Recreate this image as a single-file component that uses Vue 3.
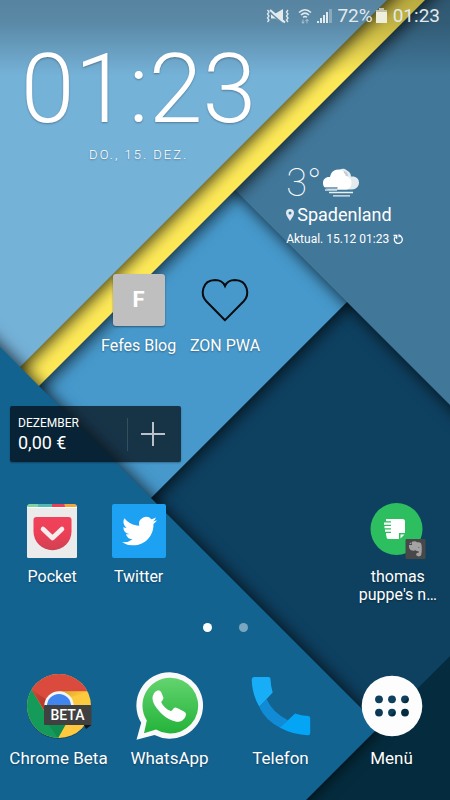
<script setup>
const signalBars = [
  { x: 0, h: 2 }, { x: 3, h: 5 }, { x: 6, h: 8 }, { x: 9, h: 11 }
]
const pages = [{ id: 1, active: true }, { id: 2, active: false }]
</script>

<template>
  <div class="screen">
    <svg class="wallpaper" viewBox="0 0 450 800" preserveAspectRatio="xMidYMid slice" aria-hidden="true">
      <defs>
        <linearGradient id="scrim" x1="0" y1="0" x2="0" y2="1">
          <stop offset="0" stop-color="#000" stop-opacity=".26" />
          <stop offset=".3" stop-color="#000" stop-opacity=".23" />
          <stop offset="1" stop-color="#000" stop-opacity="0" />
        </linearGradient>
      </defs>
      <rect width="450" height="800" fill="#0e4060" />
      <polygon points="500,606 500,900 206,900" fill="#052c3e" />
      <polygon class="sheet" points="200,0 649,0 500,149 100,549 -60,389" fill="#4799cc" />
      <polygon class="sheet" points="45,0 545,500 700,300 600,-100 200,-100" fill="#417799" />
      <polygon class="sheet" points="-75,500 525,-100 300,-100 -200,300" fill="#fde957" />
      <polygon class="sheet" points="-113,500 487,-100 -100,-100 -200,300" fill="#75b2d8" />
      <polygon class="sheet front" points="-153,194 379.500,726.500 206,900 -200,900" fill="#136391" />
      <rect width="450" height="76" fill="url(#scrim)" />
    </svg>

    <header class="status">
      <svg width="24" height="16" viewBox="0 0 24 16" aria-label="Vibrieren">
        <path d="M5 5.500h4.500L17 1v14l-7.500-4.500H5z" fill="currentColor" />
        <path d="M4 4.500l14 12" stroke="#5f8ba5" stroke-width="1.500" />
        <path d="M4 2l15 12.500" stroke="currentColor" stroke-width="2" />
        <path d="M1.500 2l1.500 2-1.500 2L3 8l-1.500 2L3 12l-1.500 2M22 2l-1.500 2L22 6l-1.500 2L22 10l-1.500 2L22 14" fill="none" stroke="currentColor" stroke-width="1.300" />
      </svg>
      <svg class="wifi" width="14" height="16" viewBox="0 0 14 16" fill="none" stroke="currentColor" stroke-width="1.600" aria-label="WLAN">
        <path d="M1 4.500q6-5.500 12 0M3 7q4-3.600 8 0M5.200 9.300q1.800-1.600 3.600 0" />
        <path d="M5 11.500v3.500M3.500 14L5 15.300 6.500 14M9 15.300v-3.800M7.500 13L9 11.500l1.500 1.500" stroke-width="1" opacity=".6" />
      </svg>
      <svg class="signal" width="15" height="15" viewBox="0 0 15 15" fill="currentColor" aria-label="Mobilfunk">
        <rect v-for="bar in signalBars" :key="bar.x" :x="bar.x" :y="15 - bar.h" width="2" :height="bar.h" />
        <rect x="12" y="1" width="3" height="14" opacity=".35" />
      </svg>
      <span>72%</span>
      <svg width="11" height="15" viewBox="0 0 11 15" aria-label="Akku">
        <path d="M3 0h5v2h3v13H0V2h3z" fill="#eeeedd" />
        <path d="M3 0h5v2h3v2H0V2h3z" fill="#8b8a70" opacity=".45" />
      </svg>
      <time class="status-time">01:23</time>
    </header>

    <main class="home">
      <section class="clock">
        <time class="time">01:23</time>
        <span class="date">DO., 15. DEZ.</span>
      </section>

      <section class="weather">
        <div class="temp">
          <span>3°</span>
          <svg width="38" height="30" viewBox="0 0 38 30" aria-label="Nebel">
            <path d="M15 4C17 1 22-.500 25 2.500c3 1.500 4 4 4 6 5-.500 8 2 8 6s-3 7-7 7H15z" fill="#e4eaee" />
            <path d="M7 21.500C3 21 1 18.500 1 15c0-4 3-6.500 7-6 1-6 6-9 11-7 3 1 4 3 4.500 6C28 9 30 12 29.500 15.500c-.500 4-3 6-6 6z" fill="#fff" />
            <path d="M22 4c2 .500 3 2 3 4" fill="none" stroke="#c5cdd2" stroke-width="2" />
            <path d="M1 20h14.500" stroke="#417799" stroke-width="1.300" />
            <path d="M3 22h12" stroke="#e8f0f4" stroke-width="1.300" />
            <path d="M7 24.500h24M11 27.800h17" stroke="#e8f0f4" stroke-width="1.300" />
          </svg>
        </div>
        <div class="place">
          <svg width="8" height="12" viewBox="0 0 8 12" aria-hidden="true">
            <path fill-rule="evenodd" d="M4 0a4 4 0 0 1 4 4c0 3-2.500 5-4 8C2.500 9 0 7 0 4a4 4 0 0 1 4-4zm0 2.500a1.500 1.500 0 1 0 0 3 1.500 1.500 0 0 0 0-3z" fill="#dfe9ef" />
          </svg>
          <span>Spadenland</span>
        </div>
        <div class="updated">
          <span>Aktual. 15.12 01:23</span>
          <button class="plain" type="button" aria-label="Aktualisieren">
            <svg width="11" height="11" viewBox="0 0 11 11" fill="none" stroke="currentColor" stroke-width="1.300">
              <path d="M6 1.500a4 4 0 1 1-3.600 1.200M.5 1.500h3.200v3.200" />
              <path d="M5.500 0v3.200L8 1.600z" fill="currentColor" stroke="none" />
            </svg>
          </button>
        </div>
      </section>

      <button class="app fefe" type="button">
        <span class="icon"><span class="letter">F</span></span>
        <span class="label">Fefes Blog</span>
      </button>
      <button class="app zon" type="button">
        <span class="icon">
          <svg width="54" height="54" viewBox="0 0 54 54" aria-hidden="true">
            <path d="M27 47.200L8.300 28.300C2 21.500 4 7.300 17 7c5 0 8.500 2.500 10 6 1.500-3.500 5-6 10-6 13 .300 15 14.500 8.700 21.300z" fill="none" stroke="#080c10" stroke-width="2" />
          </svg>
        </span>
        <span class="label">ZON PWA</span>
      </button>

      <section class="budget">
        <div class="amount">
          <span class="month">DEZEMBER</span>
          <span class="sum">0,00 €</span>
        </div>
        <button class="plain add" type="button" aria-label="Hinzufügen">
          <svg width="24" height="24" viewBox="0 0 24 24"><path d="M12 0v24M0 12h24" stroke="#b9c2c8" stroke-width="2" /></svg>
        </button>
      </section>

      <button class="app pocket" type="button">
        <span class="icon">
          <svg width="54" height="54" viewBox="0 0 54 54" aria-hidden="true">
            <defs>
              <linearGradient id="pk" x1="0" y1="0" x2="0" y2="1"><stop offset="0" stop-color="#f0425a" /><stop offset=".5" stop-color="#ed3f56" /><stop offset="1" stop-color="#cf4152" /></linearGradient>
            </defs>
            <rect x="2" y="1" width="50" height="53" rx="1.500" fill="#ebebec" />
            <path d="M3.500 0H14l-2 3.500H2z" fill="#7bd3a0" />
            <path d="M14 0h13v3.500H12z" fill="#4dbab4" />
            <path d="M27 0h12l2 3.500H27z" fill="#ec3e55" />
            <path d="M39 0h11.500L52 3.500H41z" fill="#f3a73b" />
            <path d="M2 3.500h50" stroke="#fff" />
            <path d="M11.500 13h32a3 3 0 0 1 3 3v11.500a18.700 18.500 0 0 1-38 0V16a3 3 0 0 1 3-3z" fill="url(#pk)" />
            <path d="M18 25l9.500 9 9.500-9" fill="none" stroke="#f4eeee" stroke-width="4.600" stroke-linecap="round" stroke-linejoin="round" />
          </svg>
        </span>
        <span class="label">Pocket</span>
      </button>
      <button class="app twitter" type="button">
        <span class="icon">
          <svg width="54" height="54" viewBox="0 0 54 54" aria-hidden="true">
            <rect width="54" height="54" rx="2" fill="#1da1f2" />
            <path transform="translate(10 9.600) scale(1.460)" fill="#fff" d="M23.953 4.570a10 10 0 01-2.825.775 4.958 4.958 0 002.163-2.723c-.951.555-2.005.959-3.127 1.184a4.920 4.920 0 00-8.384 4.482C7.690 8.095 4.067 6.130 1.640 3.162a4.822 4.822 0 00-.666 2.475c0 1.710.87 3.213 2.188 4.096a4.904 4.904 0 01-2.228-.616v.06a4.923 4.923 0 003.946 4.827 4.996 4.996 0 01-2.212.085 4.936 4.936 0 004.604 3.417 9.867 9.867 0 01-6.102 2.105c-.39 0-.779-.023-1.170-.067a13.995 13.995 0 007.557 2.209c9.053 0 13.998-7.496 13.998-13.985 0-.21 0-.42-.015-.63A9.935 9.935 0 0024 4.590z" />
          </svg>
        </span>
        <span class="label">Twitter</span>
      </button>
      <button class="app evernote" type="button">
        <span class="icon">
          <svg width="58" height="58" viewBox="0 0 58 58" aria-hidden="true">
            <circle cx="27.500" cy="27" r="26" fill="#2dbe60" />
            <path d="M17 17h16.500q2.500 0 2.500 2.500V31h-6v6H19.500q-2 0-2-2v-1.500h-.500V31H22v-1.200h-6V27.500h6v-1.300h-6.500V24H22v-1.300h-7V20.500h7V19.300h-5z" fill="#fff" />
            <path d="M31.500 36.500v-4H35.500z" fill="#fff" />
            <rect x="36.500" y="37" width="20" height="20" rx="1" fill="#484848" />
            <path d="M40 43h3v-3.200c2-1 4-.600 5 .500 2 .100 4 .300 4.300 1.600.700 3 .700 7.500-.100 10.800-.400 2-3.500 2.200-4.700.900-.600-1-.300-2.600.9-2.900h1.300v-1.500c-1.200.200-2.200.100-3-.900-2.400.900-5 .400-6-1.200-.600-1.300-.900-2.800-.7-4.100zM40.300 42.100l2-2v2z" fill="#a3a3a3" />
            <path d="M49 45.800q.200-1.500 1.800-.400z" fill="#484848" />
          </svg>
        </span>
        <span class="label">thomas puppe's n…</span>
      </button>
    </main>

    <nav class="pages" aria-label="Seiten">
      <button v-for="p in pages" :key="p.id" type="button" class="dot" :class="{ active: p.active }" :aria-label="`Seite ${p.id}`"></button>
    </nav>

    <footer class="dock">
      <button class="app" type="button">
        <span class="icon">
          <svg width="66" height="66" viewBox="0 0 66 66" aria-hidden="true">
            <defs>
              <clipPath id="disc"><circle cx="33" cy="33" r="32" /></clipPath>
              <linearGradient id="redShade" x1="0" y1="0" x2="1" y2="1"><stop offset="0" stop-color="#7e1c12" stop-opacity=".1" /><stop offset="1" stop-color="#7e1c12" stop-opacity=".5" /></linearGradient>
              <linearGradient id="yellowShade" x1="0" y1="0" x2="1" y2=".3"><stop offset="0" stop-color="#b77d13" stop-opacity=".7" /><stop offset="1" stop-color="#e6a925" stop-opacity="0" /></linearGradient>
            </defs>
            <circle cx="33" cy="34" r="32" fill="#000" opacity=".25" />
            <g clip-path="url(#disc)">
              <rect width="66" height="66" fill="#fdc93e" />
              <path d="M0 8l5.500 8L20 41l13 7 12 -6L31 67H0z" fill="#149a59" />
              <path d="M0 8L5.500 16.500 20 40.500l13-22.200h33V0H0z" fill="#da4b3d" />
              <path d="M5.500 16.500L20 40.500 21 27z" fill="url(#redShade)" />
              <path d="M33 18.300h30L46 24z" fill="url(#yellowShade)" />
              <path d="M20 48l20 3-8 14z" fill="#087c45" opacity=".45" />
            </g>
            <circle cx="33" cy="33" r="14.700" fill="#f5f5f5" />
            <circle cx="33" cy="33" r="12" fill="#4385ef" />
            <path d="M58 52h7.500L60 56z" fill="#161616" />
            <rect x="18" y="32" width="47.500" height="20" rx="1" fill="#404040" />
            <text x="41.500" y="47" text-anchor="middle" class="beta">BETA</text>
          </svg>
        </span>
        <span class="label">Chrome Beta</span>
      </button>
      <button class="app" type="button">
        <span class="icon">
          <svg width="68" height="70" viewBox="0 0 68 70" aria-hidden="true">
            <defs><linearGradient id="wa" x1="0" y1="0" x2="0" y2="1"><stop offset="0" stop-color="#63d46e" /><stop offset="1" stop-color="#23b33a" /></linearGradient></defs>
            <path d="M34 1.200a33.300 33.300 0 1 1-15.500 62.900L.500 68.800 5.200 51.800A33.300 33.300 0 0 1 34 1.200z" fill="#f9f9f9" />
            <path d="M34 6.800a27.800 27.800 0 1 1-14 51.600L8 62.300l2.800-12.800A27.800 27.800 0 0 1 34 6.800z" fill="url(#wa)" />
            <path d="M21.500 19.500c2-.300 3 .200 3.600 1.500l2.200 5.200c.800 2.300-2.300 4-2 5.200 2 4 5.500 7 9.500 8.600 1.300.300 2.800-3.600 4.500-3.500 1.500.200 6.700 2.900 7.700 3.500 2 1 3.200 2 3 3.500-.400 3.500-3.500 7-7.300 7.300-4.300.300-10-2.500-14.500-5.800C23 40.500 16.700 33.500 16.500 27.500c0-4 2.500-7.300 5-8z" fill="#fff" />
          </svg>
        </span>
        <span class="label">WhatsApp</span>
      </button>
      <button class="app" type="button">
        <span class="icon">
          <svg width="60" height="60" viewBox="0 0 60 60" aria-hidden="true">
            <path d="M15.500 23Q22 37 37 44.200L29.500 52Q14 44 8.300 31z" fill="#118bd5" />
            <path d="M3 1h14.500q2 0 2 2 .200 7 2.200 13.500L8.300 30.800Q1 18 .700 3.500.700 1 3 1z" fill="#18adf7" />
            <path d="M44 37.600q6.500 2.200 13 2.300 2.200 0 2.200 2.200V57q0 2.200-2.200 2.200Q42.500 59 29 51.800z" fill="#05a5f6" />
          </svg>
        </span>
        <span class="label">Telefon</span>
      </button>
      <button class="app" type="button">
        <span class="icon">
          <svg width="62" height="62" viewBox="0 0 62 62" aria-hidden="true">
            <defs>
              <mask id="holes">
                <rect width="62" height="62" fill="#fff" />
                <g fill="#000">
                  <circle cx="18" cy="24.300" r="3.900" /><circle cx="31" cy="24.300" r="3.900" /><circle cx="44" cy="24.300" r="3.900" />
                  <circle cx="18" cy="37.600" r="3.900" /><circle cx="31" cy="37.600" r="3.900" /><circle cx="44" cy="37.600" r="3.900" />
                </g>
              </mask>
            </defs>
            <circle cx="31" cy="31" r="30.300" fill="#fdfdfd" mask="url(#holes)" />
          </svg>
        </span>
        <span class="label">Menü</span>
      </button>
    </footer>
  </div>
</template>

<style>
body { background: #0e4060; }
</style>

<style scoped>
.screen {
  position: relative;
  isolation: isolate;
  overflow: hidden;
  box-sizing: border-box;
  min-height: 100vh;
  display: flex;
  flex-direction: column;
  font-family: Roboto, "Liberation Sans", sans-serif;
  color: #fff;
}
.wallpaper {
  position: absolute;
  inset: 0;
  z-index: -1;
  width: 100%;
  height: 100%;
}
.sheet { filter: drop-shadow(2px 3px 8px rgba(0, 0, 0, .75)); }
.sheet.front { filter: drop-shadow(2px 0 8px rgba(0, 0, 0, .75)); }
button {
  border: 0;
  padding: 0;
  margin: 0;
  background: none;
  color: inherit;
  font: inherit;
  cursor: pointer;
}
svg { display: block; flex: none; }
.status {
  display: flex;
  align-items: center;
  justify-content: flex-end;
  height: 31px;
  padding-right: 10px;
  font-size: 19px;
  color: #e2eaee;
}
.wifi { margin-left: 8px; }
.signal { margin: 0 5px; }
.status span { margin-right: 3px; }
.status-time { margin-left: 6px; }
.home {
  flex: 1;
  display: grid;
  grid-template-columns: repeat(5, minmax(0, 1fr));
  grid-template-rows: repeat(5, minmax(115px, 1fr));
  padding: 0 9px;
}
.clock {
  grid-area: 1 / 1 / 3 / 4;
  display: flex;
  flex-direction: column;
  align-items: center;
  text-shadow: 0 1px 2px rgba(0, 0, 0, .3);
}
.time {
  font-size: 97px;
  line-height: 116px;
  font-weight: 300;
}
.date {
  font-size: 13px;
  line-height: 16px;
  font-weight: 300;
  letter-spacing: 2px;
}
.weather {
  grid-area: 2 / 4 / 3 / 6;
  padding: 17px 0 0 18px;
}
.temp {
  display: flex;
  align-items: center;
  height: 40px;
  font-size: 38px;
  font-weight: 100;
}
.place {
  display: flex;
  align-items: center;
  gap: 3px;
  font-size: 18px;
  line-height: 24px;
}
.updated {
  display: flex;
  align-items: center;
  gap: 4px;
  font-size: 12px;
  line-height: 24px;
}
.app {
  display: flex;
  flex-direction: column;
  align-items: center;
  min-width: 0;
}
.home .app { padding-top: 10px; }
.icon {
  display: flex;
  align-items: center;
  justify-content: center;
  height: 58px;
}
.label {
  margin-top: 8px;
  font-size: 17px;
  line-height: 18px;
  text-shadow: 0 1px 2px rgba(0, 0, 0, .35);
}
.home .label { font-size: 16px; }
.letter {
  width: 52px;
  line-height: 52px;
  border-radius: 3px;
  background: #bfbfbf;
  box-shadow: 0 1px 2px rgba(0, 0, 0, .4);
  font-size: 22px;
  font-weight: 700;
}
.fefe { grid-area: 3 / 2; }
.zon { grid-area: 3 / 3; }
.pocket { grid-area: 5 / 1; }
.twitter { grid-area: 5 / 2; }
.evernote { grid-area: 5 / 5; }
.budget {
  grid-area: 4 / 1 / 5 / 3;
  align-self: center;
  display: flex;
  align-items: center;
  height: 56px;
  margin: 0 1px;
  border-radius: 2px;
  background: rgba(3, 8, 14, .7);
  box-shadow: 0 1px 2px rgba(0, 0, 0, .3);
}
.amount {
  flex: 1;
  display: flex;
  flex-direction: column;
  padding-left: 8px;
}
.month { font-size: 12px; line-height: 18px; }
.sum { font-size: 18px; line-height: 22px; }
.add {
  display: flex;
  align-items: center;
  justify-content: center;
  width: 54px;
  height: 33px;
  border-left: 1px solid #32505d;
  padding-right: 2px;
  box-sizing: border-box;
}
.pages {
  display: flex;
  align-items: center;
  justify-content: center;
  gap: 27px;
  height: 40px;
}
.dot {
  width: 9px;
  height: 9px;
  border-radius: 50%;
  background: #7ba6bf;
}
.dot.active { background: #fff; }
.dock {
  display: grid;
  grid-template-columns: repeat(4, minmax(0, 1fr));
  padding: 24px 3px 33px;
}
.dock .icon { height: 70px; }
.beta {
  font-family: Roboto, sans-serif;
  font-size: 14px;
  font-weight: 500;
  fill: #fff;
}
</style>
